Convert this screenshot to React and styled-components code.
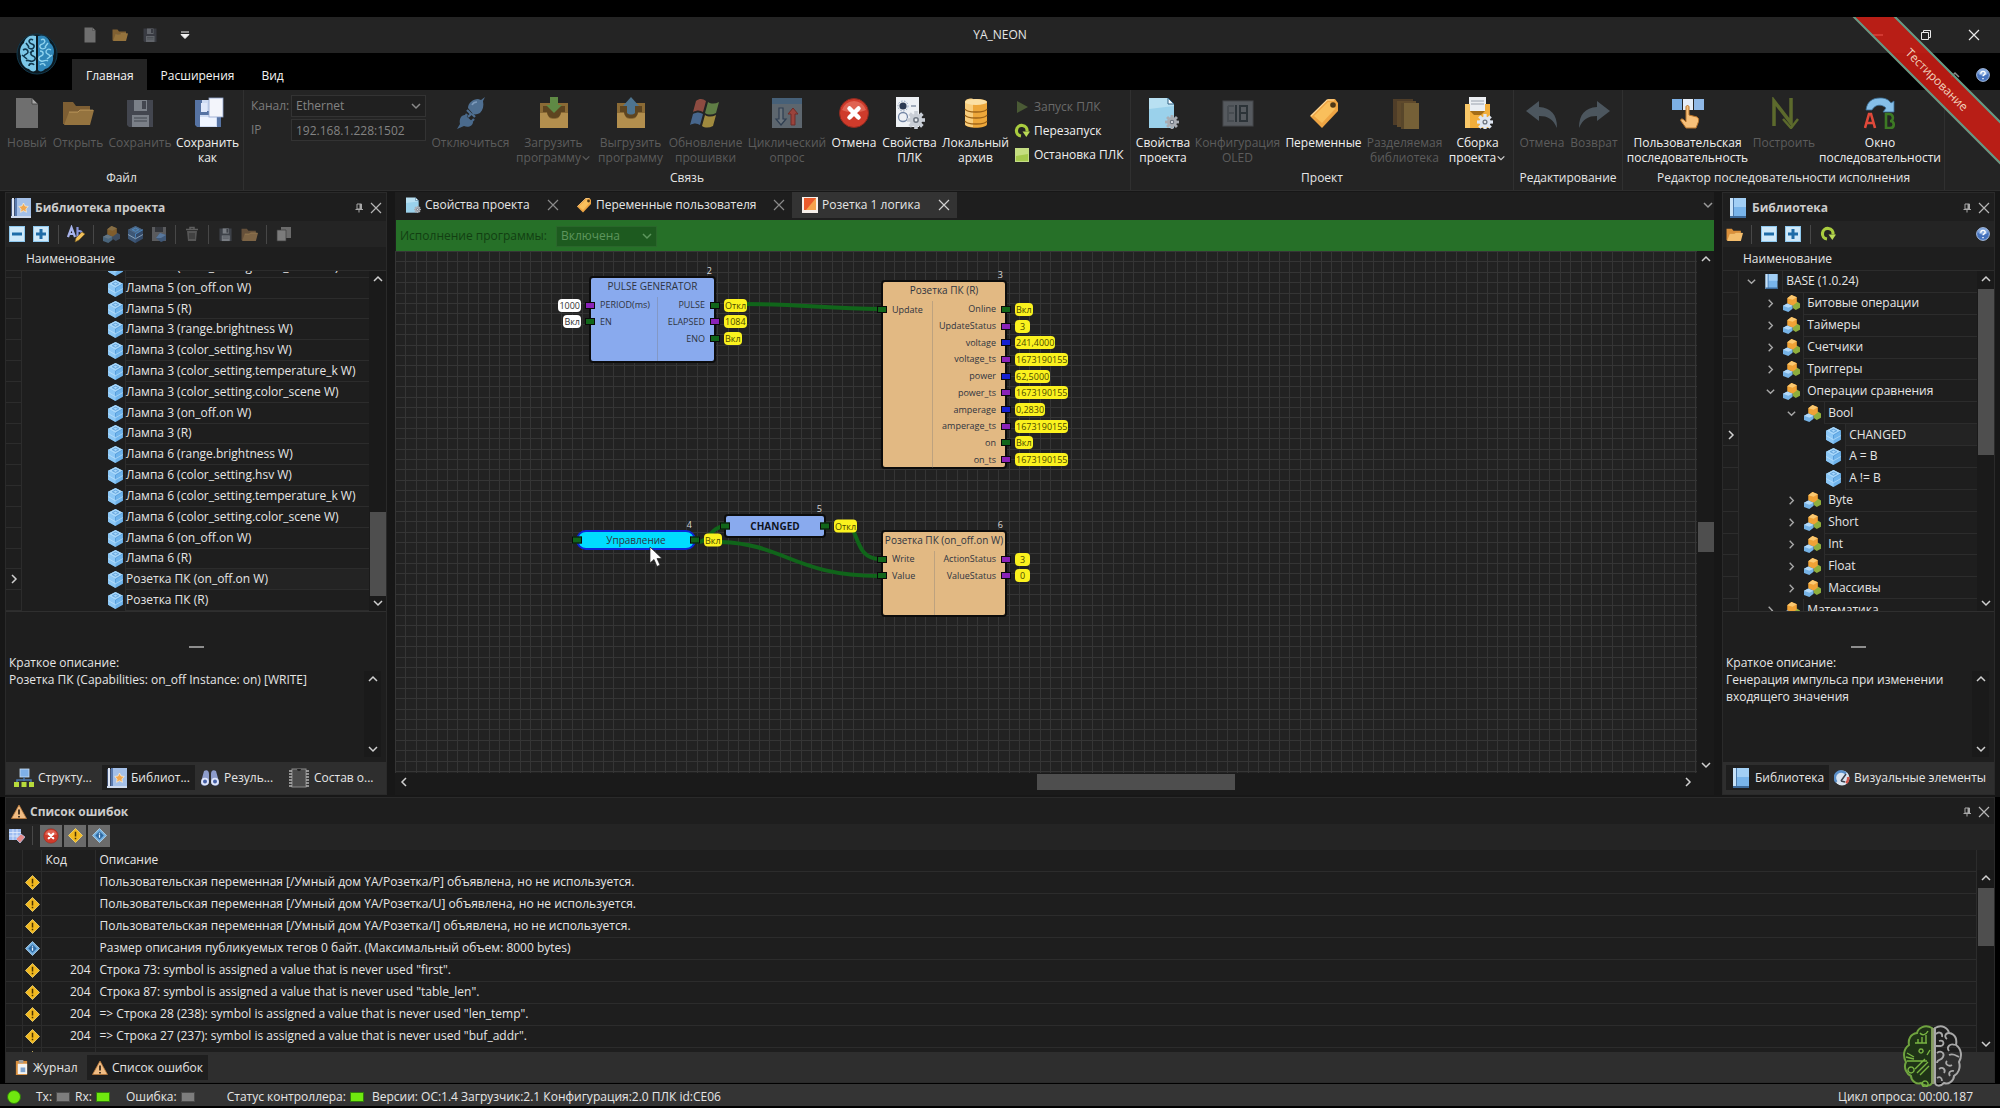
import React from 'react';
import styled, { createGlobalStyle, css } from 'styled-components';

const c = {
  black: '#000000',
  bar: '#242424',
  panel: '#1e1e1e',
  frame: '#2a2a2a',
  strip: '#2e2e2e',
  text: '#e6e6e6',
  dim: '#5c5c5c',
  line: '#2c2c2c',
  thumb: '#4e4e4e',
};

const Global = createGlobalStyle`
  * { box-sizing: border-box; }
  html, body { margin: 0; background: ${c.black}; }
  body, button, input, select, textarea, table {
    font-family: "Open Sans", "Noto Sans", sans-serif;
    font-size: 12px;
    line-height: 16px;
    color: ${c.text};
  }
  button { background: none; border: 0; padding: 0; cursor: default; }
  ul { list-style: none; margin: 0; padding: 0; }
  svg { display: block; flex: none; }
`;

/* ---------- icons ---------- */

const Svg = ({ size = 16, box = 16, children, ...rest }) => (
  <svg width={size} height={size} viewBox={`0 0 ${box} ${box}`} fill="none" aria-hidden="true" {...rest}>
    {children}
  </svg>
);

const Gear = ({ x, y, r, fill = '#c9ced6' }) => (
  <g transform={`translate(${x} ${y})`}>
    {[0, 45, 90, 135].map((a) => (
      <rect key={a} x={-r * 0.2} y={-r} width={r * 0.4} height={r * 2} fill={fill} transform={`rotate(${a})`} />
    ))}
    <circle r={r * 0.7} fill={fill} />
    <circle r={r * 0.32} fill="#6d7580" />
    <circle r={r * 0.16} fill="#e8ebef" />
  </g>
);

const PageIcon = ({ size, tint = '#8f8f8f' }) => (
  <Svg size={size} box={32}>
    <path d="M5 1h16l6 6v24H5z" fill={tint} />
    <path d="M21 1v6h6z" fill="#a5a5a5" stroke="#3c3c3c" strokeWidth=".8" />
  </Svg>
);
const FolderIcon = ({ size, a = '#a87a38', b = '#c69547' }) => (
  <Svg size={size} box={32}>
    <path d="M1 5h10l3 4h14v6H9L5 27H1z" fill={a} />
    <path d="M7 15h9l2-2h14l-4 15H2z" fill={b} />
    <path d="M7 15h9l2-2h13" stroke="#e8c07a" strokeWidth="1" opacity=".5" />
  </Svg>
);
const DiskIcon = ({ size, a = '#43464f', b = '#7b8088', page }) => (
  <Svg size={size} box={32}>
    <path d="M3 3h26v27H5l-2-2z" fill={a} />
    <rect x="10" y="3" width="13" height="11" fill={b} />
    <rect x="18" y="4" width="4" height="8" fill={a} />
    <rect x="8" y="18" width="17" height="12" fill={b} />
    <path d="M10 21h13M10 24h13" stroke={a} />
    {page && (
      <g>
        <rect x="8" y="20" width="16" height="9" fill="#eef4ff" />
        <rect x="9" y="6" width="6" height="9" fill="#dfe8fa" />
        <rect x="17" y="1" width="14" height="19" fill="#f3f5fb" stroke="#8fa3cc" strokeWidth=".8" />
      </g>
    )}
  </Svg>
);
const PlugIcon = () => (
  <Svg size={32} box={32}>
    <path d="M30 0l-2 4c1 5 0 9-3 12-2 1-5 2-7 1l-5-6c0-5 5-9 10-9l3 1z" fill="#4f6f91" />
    <path d="M12 13l4 4-3 3M17 17l3 3" stroke="#4f6f91" strokeWidth="2.200" />
    <path d="M2 32l3-5c-1-5 1-9 5-9l8 7c0 4-5 6-9 4z" fill="#4a6a8c" />
    <path d="M12 17l-2 3M19 22l-3 3" stroke="#4a6a8c" strokeWidth="2.400" />
    <path d="M17 8c1-2 3-3 5-3" stroke="#7d9abb" strokeWidth="1.500" />
  </Svg>
);
const BoxIcon = ({ up }) => (
  <Svg size={32} box={32}>
    <path d="M2 6h28v25H2z" fill="#8a6a35" />
    <path d="M2 16h7c1 5 4 6 7 6s6-1 7-6h7v15H2z" fill="#b38f4e" />
    <path d="M5 9h22v6h-4c-1 5-3 6-7 6s-6-1-7-6H5z" fill="#5e4520" />
    {up ? <path d="M16 0l8 9h-4v7c-2 2-6 2-8 0V9H8z" fill="#4e748f" /> : <path d="M16 16L8 8h4V0h8v8h4z" fill="#5f8a45" />}
  </Svg>
);
const FlagIcon = () => (
  <Svg size={32} box={32}>
    <path d="M6 4c4-3 7-2 10 0l-3 11c-3-2-6-2-10 0z" fill="#8d4b41" />
    <path d="M18 5c3 2 7 2 11 0l-3 11c-4 2-8 2-11 0z" fill="#5f7d45" />
    <path d="M3 17c4-2 7-2 10 0l-3 11c-3-2-6-2-10 0z" fill="#47668c" />
    <path d="M15 18c3 2 7 2 11 0l-3 11c-4 2-8 2-11 0z" fill="#a08a3e" />
  </Svg>
);
const CycleIcon = () => (
  <Svg size={32} box={32}>
    <rect x="1" y="1" width="30" height="30" fill="#5d666e" />
    <rect x="1" y="1" width="30" height="6" fill="#466078" />
    <path d="M8 11h4v11h3l-5 6-5-6h3z" fill="#6b747c" stroke="#2e3d50" strokeWidth="1.200" />
    <path d="M20 28V17h-3l5-6 5 6h-3v11z" fill="#9a433c" stroke="#6e2d28" />
  </Svg>
);
const CancelIcon = ({ size = 32 }) => (
  <Svg size={size} box={32}>
    <circle cx="16" cy="16" r="14.500" fill="#cf3b2b" stroke="#8e2a20" />
    <path d="M4 13a12.500 12.500 0 0 1 24 0c-6 3-18 3-24 0z" fill="#e77564" opacity=".7" />
    <path d="M11.500 11.500l9 9M20.500 11.500l-9 9" stroke="#fff" strokeWidth="4.500" strokeLinecap="round" />
  </Svg>
);
const PlcPropsIcon = () => (
  <Svg size={32} box={32}>
    <rect x="2" y="0" width="23" height="30" fill="#eef1f5" />
    <circle cx="9" cy="9" r="3.600" fill="#2d3a52" />
    <circle cx="9" cy="9" r="5" stroke="#8ca0bd" strokeDasharray="1.500 1.500" />
    <path d="M17 9h5M17 20h3" stroke="#8794a8" strokeWidth="1.500" />
    <circle cx="9" cy="20" r="4.500" stroke="#7486a5" strokeWidth="1.300" />
    <Gear x={22} y={23} r={9} />
  </Svg>
);
const DbIcon = () => (
  <Svg size={32} box={32}>
    <path d="M5 5c0-4 22-4 22 0v22c0 5-22 5-22 0z" fill="#eda73a" />
    <path d="M5 5c0-4 8-4 8-3v28c-4 0-8-1-8-3z" fill="#f8cd7c" />
    <ellipse cx="16" cy="5" rx="11" ry="3" fill="#fbe0a4" />
    <path d="M5 12c2 4 20 4 22 0M5 18c2 4 20 4 22 0M5 24c2 4 20 4 22 0" stroke="#9d6317" strokeWidth="1.300" />
  </Svg>
);
const PropsIcon = ({ size = 32 }) => (
  <Svg size={size} box={32}>
    <path d="M2 1h19l6 6v24H2z" fill="#b8e0f2" />
    <path d="M2 12l25-3v22H2z" fill="#8dcbe8" opacity=".7" />
    <path d="M21 1v6h6z" fill="#f5fbff" stroke="#2f5f80" />
    <Gear x={25} y={25} r={7} fill="#a9adb3" />
  </Svg>
);
const OledIcon = () => (
  <Svg size={32} box={32}>
    <rect x="1" y="4" width="30" height="25" fill="#565a5f" stroke="#44474b" />
    <path d="M6 9h6M6 9v7M6 16h6M6 16v8h6" stroke="#474c51" strokeWidth="2" />
    <path d="M14 8v17M18 9h7v7h-7zM18 16h7v8h-7z" stroke="#2c3338" strokeWidth="2" />
  </Svg>
);
const TagIcon = ({ size = 32 }) => (
  <Svg size={size} box={32}>
    <path d="M20 2h7l3 4v8L14 31 2 19z" fill="#eea544" />
    <path d="M6 19L20 5l5 1 2 6-13 14z" fill="#f9bf5c" />
    <circle cx="25" cy="8" r="2.800" fill="#4d3716" />
    <path d="M3 19L19 3h7" stroke="#fbd89a" strokeWidth="1.200" />
  </Svg>
);
const SharedLibIcon = () => (
  <Svg size={32} box={32}>
    <path d="M4 2h20v26H4z" fill="#4f3d28" />
    <path d="M8 4h19v26H8z" fill="#5f4a2c" />
    <path d="M12 6h18v26H12z" fill="#756037" />
    <path d="M12 6h3v26h-3z" fill="#58462a" />
  </Svg>
);
const BuildIcon = () => (
  <Svg size={32} box={32}>
    <rect x="7" y="0" width="17" height="14" fill="#eceff3" />
    <path d="M9 4h13M9 7h13" stroke="#9aa2ad" />
    <path d="M3 7h5v7h15V7h5v24H3z" fill="#f2ae3b" />
    <path d="M3 7h5v24H3z" fill="#f9c868" />
    <path d="M8 14h15l-4 4h-7z" fill="#a46d18" />
    <Gear x={23} y={25} r={8} fill="#dfe6f2" />
  </Svg>
);
const UndoIcon = ({ flip }) => (
  <Svg size={32} box={32} style={flip ? { transform: 'scaleX(-1)' } : undefined}>
    <path d="M0 14L13 4v6c12 1 18 7 18 21-4-9-9-12-18-12v5z" fill="#4c565e" />
  </Svg>
);
const HandSeqIcon = () => (
  <Svg size={32} box={32}>
    <rect x="0" y="2" width="10" height="11" fill="#7db0e4" />
    <rect x="11" y="2" width="10" height="11" fill="#e6eef8" />
    <rect x="22" y="2" width="10" height="11" fill="#8fb8e6" />
    <path d="M14 10c0-2 3-2 3 0v8l8 2c2 1 2 4 1 6l-2 5H14l-5-7c-1-2 1-3 3-1l2 2z" fill="#f6c07a" stroke="#b8742c" />
  </Svg>
);
const BuildSeqIcon = () => (
  <Svg size={32} box={32}>
    <path d="M6 29V4l17 22V1" stroke="#5c6a2c" strokeWidth="3.500" />
    <path d="M15 22l8 9 7-9" stroke="#5c6a2c" strokeWidth="2.500" />
  </Svg>
);
const SeqWindowIcon = () => (
  <Svg size={32} box={32}>
    <path d="M2 13C3 4 9 1 16 1c6 0 9 2 11 5l3-2v11H19l3-4c-4-4-11-4-14 2z" fill="#86bfe8" stroke="#3a6d94" strokeWidth=".8" />
    <path d="M1 31l4-14h2l4 14M3 26h6" stroke="#e0493a" strokeWidth="2.600" />
    <path d="M22 17v14h4c5 0 5-7 0-7 4 0 4-7-1-7z" stroke="#3d7a24" strokeWidth="2.600" />
  </Svg>
);
const PlayIcon = () => (
  <Svg>
    <path d="M3 2l11 6-11 6z" fill="#4a5a35" />
  </Svg>
);
const RestartIcon = ({ size = 16 }) => (
  <Svg size={size}>
    <path d="M13 8.500A5.300 5.300 0 1 0 7 13" stroke="#a9cc3f" strokeWidth="3.200" />
    <path d="M8.500 8.500H16L12.300 14z" fill="#b9da55" />
  </Svg>
);
const StopIcon = () => (
  <Svg>
    <rect x="1.500" y="1.500" width="13" height="13" fill="#a5c94c" stroke="#c4dd85" />
    <path d="M2 2h12v5L2 9z" fill="#c5de80" />
  </Svg>
);
const HelpIcon = ({ size = 16 }) => (
  <Svg size={size}>
    <circle cx="8" cy="8" r="7.300" fill="#4572bd" stroke="#b9cff0" />
    <ellipse cx="8" cy="5" rx="5.500" ry="3.500" fill="#a9c6ee" opacity=".7" />
    <path d="M5.500 6.500c0-3.500 5-3.500 5-.5 0 2-2.500 1.800-2.500 3.500M8 11.500v1.300" stroke="#fff" strokeWidth="1.600" />
  </Svg>
);
const Chevron = ({ dir = 'down', size = 12, color = '#d0d0d0' }) => {
  const d = { down: 'M2 4l4 4 4-4', up: 'M2 8l4-4 4 4', left: 'M8 2L4 6l4 4', right: 'M4 2l4 4-4 4' }[dir];
  return (
    <Svg size={size} box={12}>
      <path d={d} stroke={color} strokeWidth="1.500" />
    </Svg>
  );
};
const CrossIcon = ({ size = 12, color = '#b5b5b5' }) => (
  <Svg size={size} box={12}>
    <path d="M1 1l10 10M11 1L1 11" stroke={color} strokeWidth="1.200" />
  </Svg>
);
const PinIcon = () => (
  <Svg size={10} box={10}>
    <path d="M3 1h4.500v5H3zM1.500 6.500H9M5 6v3.500" stroke="#a8a8a8" />
    <path d="M5.500 1h2v5h-2z" fill="#a8a8a8" />
  </Svg>
);
const BookIcon = ({ size = 20, star }) => (
  <Svg size={size} box={20}>
    {star ? (
      <g>
        <path d="M0 1h20v19H0z" fill="#3f5072" />
        <path d="M4 0h16v18H4z" fill="#a4c0e8" />
        <path d="M1 0h2v18H1z" fill="#dfe7f5" />
        <path d="M4 0h2v18H4z" fill="#5a7bb0" />
        <path d="M0 18h20v2H0z" fill="#cdd9ec" />
        <path d="M12.500 5l1.500 3 3.300.5-2.400 2.400.6 3.400-3-1.600-3 1.600.6-3.400-2.400-2.400L11 8z" fill="#f0a850" stroke="#fff1d8" strokeWidth=".7" />
      </g>
    ) : (
      <g>
        <path d="M2 0h16v20H2z" fill="#78b4ea" />
        <path d="M6 0h12v9H6z" fill="#a2cff5" />
        <path d="M2 0h3v20H2z" fill="#c7e2f8" />
        <path d="M5 0h1v20H5z" fill="#4b79ab" />
        <path d="M2 18h16v2H2z" fill="#3b6898" />
      </g>
    )}
  </Svg>
);
const SquareIcon = ({ plus }) => (
  <Svg>
    <rect x=".5" y=".5" width="15" height="15" fill="#cfe9fa" stroke="#8ec8ee" />
    <path d={plus ? 'M3 8h10M8 3v10' : 'M3 8h10'} stroke="#1f6ca8" strokeWidth="3" />
  </Svg>
);
const AbIcon = () => (
  <Svg size={18} box={18}>
    <path d="M1 12L4.500 2.500 8 12M2.500 9h4" stroke="#a8b4ec" strokeWidth="2.200" />
    <path d="M10.500 2v9h2c3 0 3-5 0-5h-2" stroke="#8795dc" strokeWidth="2.200" />
    <path d="M8 17l1-4 6-6 3 2-6 6z" fill="#f0c05a" stroke="#7b5a1c" strokeWidth=".6" />
  </Svg>
);
const Cube = ({ size = 17, a = '#a9d8fb', b = '#6fb4ec', d = '#8dc8f6' }) => (
  <Svg size={size}>
    <path d="M8 0l7 3.500v8.500L8 16l-7-4V3.500z" fill={b} />
    <path d="M8 0l7 3.500L8 7.500 1 3.500z" fill={a} />
    <path d="M1 3.500l7 4V16l-7-4z" fill={d} />
    <path d="M5 3.500l3-1.500 3 1.500-3 1.500zM8 7.500l7-4M8 7.500V11" stroke="#4d93d3" strokeWidth=".7" />
    <path d="M1 8l7 4 7-4" stroke="#d4edff" strokeWidth=".6" opacity=".8" />
  </Svg>
);
const Blocks = ({ size = 17, dim }) => (
  <Svg size={size} opacity={dim ? 0.45 : 1}>
    <path d="M9 8l4-2 3 2v4l-4 2-3-2z" fill={dim ? '#5d7ea8' : '#8fae3c'} />
    <path d="M4 3l4-3 5 2v5L9 10 4 8z" fill="#f0a236" />
    <path d="M4 3l4-3 5 2-4 2.500z" fill="#fbc870" />
    <path d="M0 10l4-2 5 2v3l-4 3-5-2z" fill="#76b3e6" />
    <path d="M0 10l4-2 5 2-4 2z" fill="#b3dafa" />
  </Svg>
);
const SaveBlockIcon = () => (
  <Svg>
    <rect x="1" y="1" width="14" height="14" fill="#5a5b5e" />
    <rect x="4" y="1" width="8" height="5" fill="#33353a" />
    <path d="M5 12l4-5 6 2v5l-5 2z" fill="#3f5878" />
    <path d="M9 7l6 2-5 3-5 0z" fill="#58779c" />
  </Svg>
);
const TrashIcon = () => (
  <Svg>
    <path d="M2 3.500h12M6 3V1.500h4V3" stroke="#5e5e5e" strokeWidth="1.500" />
    <path d="M3 5h10l-1 10H4z" fill="#565656" />
    <path d="M6 7v6M8 7v6M10 7v6" stroke="#2c2c2c" />
  </Svg>
);
const CopyIcon = () => (
  <Svg>
    <path d="M5 1h10v11H5z" fill="#6a6a6a" />
    <path d="M1 4h9v11H1z" fill="#7b7b7b" stroke="#3a3a3a" strokeWidth=".7" />
  </Svg>
);
const StructIcon = () => (
  <Svg size={20} box={20}>
    <rect x="6" y="1" width="9" height="8" fill="#7fb0e8" stroke="#c7def6" strokeWidth=".8" />
    <path d="M10 9v4M3 14v-2h14v2" stroke="#4c78ad" strokeWidth="1.500" />
    <rect x="0" y="14" width="5" height="5" fill="#b7da3c" />
    <rect x="7.500" y="14" width="5" height="5" fill="#b7da3c" />
    <rect x="15" y="14" width="5" height="5" fill="#b7da3c" />
  </Svg>
);
const BinocularsIcon = () => (
  <Svg size={20} box={20}>
    <path d="M4 3c3-2 5 0 5 3v8c0 5-9 5-8 0zM16 3c-3-2-5 0-5 3v8c0 5 9 5 8 0z" fill="#8d9ccb" />
    <circle cx="5" cy="13.500" r="3.800" fill="#dfe6fb" />
    <circle cx="15" cy="13.500" r="3.800" fill="#dfe6fb" />
    <circle cx="5" cy="13.500" r="2" fill="#4660a6" />
    <circle cx="15" cy="13.500" r="2" fill="#4660a6" />
  </Svg>
);
const ChipIcon = () => (
  <Svg size={22} box={22}>
    <rect x="4" y="2" width="14" height="18" fill="#4b4b4b" stroke="#8a8a8a" />
    <path d="M1 4h3M1 7h3M1 10h3M1 13h3M1 16h3M1 19h3M18 4h3M18 7h3M18 10h3M18 13h3M18 16h3M18 19h3" stroke="#b5b5b5" strokeWidth="1.400" />
    <path d="M9 2a2 2 0 0 0 4 0" fill="#222" />
  </Svg>
);
const GaugeIcon = () => (
  <Svg>
    <circle cx="8" cy="8" r="7.500" fill="#d9e4f1" />
    <path d="M2.500 12A6 6 0 0 1 12 3.500" stroke="#5b8fc9" strokeWidth="2.500" />
    <path d="M14 7a6 6 0 0 1-2 6" stroke="#d0554b" strokeWidth="2.500" />
    <path d="M7 11l5-7M7 11l4 1" stroke="#3a3f4a" strokeWidth="1.500" />
  </Svg>
);
const LogicIcon = () => (
  <Svg size={16}>
    <rect x="0" y="0" width="16" height="16" fill="#f7f0ea" />
    <rect x="2" y="1" width="12" height="12" fill="#ea5b2c" />
    <path d="M14 1v12H4z" fill="#f6a34c" />
  </Svg>
);
const WarnTriangle = ({ size = 16 }) => (
  <Svg size={size}>
    <path d="M8 1l7.500 13.500H.5z" fill="#f1bd84" stroke="#b9783a" strokeWidth=".8" />
    <path d="M8 5.500v5M8 12v1.500" stroke="#2e2013" strokeWidth="1.700" />
  </Svg>
);
const Diamond = ({ info, size = 15 }) => (
  <Svg size={size}>
    <path d="M8 .5L15.500 8 8 15.500.5 8z" fill={info ? '#74b0e0' : '#f2b91f'} stroke={info ? '#b9dcf5' : '#fadf7a'} strokeWidth=".8" />
    {info ? (
      <g>
        <path d="M8 3.500L12.500 8 8 12.500 3.500 8z" fill="#2f6aa3" />
        <path d="M8 7v3.500M8 5v1" stroke="#e8f4ff" strokeWidth="1.300" />
      </g>
    ) : (
      <path d="M8 4v5M8 10.500v1.500" stroke="#4a3303" strokeWidth="1.600" />
    )}
  </Svg>
);
const ClearIcon = () => (
  <Svg>
    <rect x="0" y="1" width="12" height="11" fill="#9dbcf0" />
    <path d="M0 4.500h12M0 8h12M4 1v11M8 1v11" stroke="#e5edfb" strokeWidth=".8" />
    <path d="M7 11l5-5 4 3-5 6z" fill="#e88a8a" stroke="#b9c9ee" strokeWidth=".8" />
  </Svg>
);
const ClipboardIcon = () => (
  <Svg size={15}>
    <rect x="2" y="1" width="12" height="15" fill="#d98f3e" />
    <rect x="4" y="4" width="10" height="11" fill="#f4f4f2" />
    <rect x="5" y="0" width="5" height="3" fill="#9d9d9d" />
    <path d="M7 8h5v5H7z" fill="#7ea3cf" />
  </Svg>
);
const AppBrain = () => (
  <svg width="42" height="46" viewBox="0 0 42 46" fill="none" aria-hidden="true">
    <circle cx="21" cy="23" r="20" fill="#0b1a22" stroke="#12384c" />
    <path d="M20 5C14 3 9 7 8 12c-4 3-5 9-3 13-1 6 3 12 8 13 2 3 6 3 7 1z" fill="#7cc8e8" />
    <path d="M22 5c6-2 11 2 12 7 4 3 5 9 3 13 1 6-3 12-8 13-2 3-6 3-7 1z" fill="#2f86b8" />
    <path d="M17 9c-3-2-5 1-3 3s5 1 4 4-5 2-6 0M7 19c3-2 5 0 5 2s-3 2-4 4M18 20c-4 0-4 4-1 5s3 4 0 5-5-2-7 0M13 35c0-3 4-3 5-1M10 12l3 4M6 24l5 4M14 22l3-3" stroke="#10394f" strokeWidth="1.600" />
    <path d="M25 9c3-2 5 1 3 3s-5 1-4 4 5 2 6 0M35 19c-3-2-5 0-5 2s3 2 4 4M24 20c4 0 4 4 1 5s-3 4 0 5 5-2 7 0M29 35c0-3-4-3-5-1M32 12l-3 4M36 24l-5 4" stroke="#8fd3ee" strokeWidth="1.400" />
  </svg>
);
const WatermarkBrain = () => (
  <svg width="60" height="62" viewBox="0 0 60 62" fill="none" aria-hidden="true">
    <path d="M29 3C22-1 15 3 14 8 7 9 5 15 6 20c-6 4-6 12-3 17-3 6 1 12 5 14 0 5 6 9 10 7 4 4 10 3 11 0z" fill="#1f3317" stroke="#6fa33f" strokeWidth="2" />
    <path d="M30 3v56" stroke="#8a9a6a" strokeWidth="3" />
    <path d="M17 8c2 3 6 2 8-2M12 18h12M15 14v4M19 12v6M23 10v8M4 28l7 4M3 32l8 2M4 36h20M18 24a2 2 0 1 0 .1 0M24 30l3-5M12 44l10-10M14 48l11-11M17 50l9-9M8 42a3 3 0 1 0 .1 0M22 56a3 3 0 1 0 .1 0" stroke="#79b543" strokeWidth="1.400" />
    <path d="M32 3c7-4 13 0 14 5 7 1 8 7 7 12 6 4 6 12 3 17 2 6-1 12-5 14 0 5-6 9-10 7-4 4-8 3-9 0z" stroke="#a8a8a8" strokeWidth="2" />
    <path d="M33 9c3-3 7-1 6 3M46 8c-4 0-5 4-2 6M36 16c5-2 6 4 2 5h-5M52 20c-5-2-9 2-6 6M34 28c4-3 8 0 6 4s-6 2-6 6M46 30c4-2 6 0 10 2M44 36c-3 3 2 6 5 4M36 44c4-3 7 1 5 4M51 46c-4-1-6 2-4 5M34 53c3-2 5 0 5 3" stroke="#a8a8a8" strokeWidth="1.800" />
  </svg>
);
const CursorIcon = () => (
  <svg width="14" height="20" viewBox="0 0 14 20" aria-hidden="true">
    <path d="M1 0v16l4-3.500 3 7 3-1.500-3-6.500h5z" fill="#fff" stroke="#222" strokeWidth=".7" />
  </svg>
);

/* ---------- window frame ---------- */

const Shell = styled.div`
  position: relative;
  display: flex;
  flex-direction: column;
  height: 100vh;
  padding: 17px 0 2px;
  overflow: hidden;
  background: ${c.black};
`;
const TitleBar = styled.header`
  display: grid;
  grid-template-columns: 1fr auto 1fr;
  align-items: center;
  height: 36px;
  flex: none;
  background: ${c.bar};
`;
const QuickBar = styled.div`
  display: flex;
  align-items: center;
  gap: 14px;
  padding-left: 82px;
`;
const QuickButton = styled.button`
  width: 16px;
  height: 16px;
  margin-right: ${(p) => p.$after || 0}px;
  opacity: ${(p) => (p.$dim ? 0.7 : 1)};
`;
const AppTitle = styled.h1`
  margin: 0;
  font-size: 12px;
  font-weight: 400;
`;
const WindowButtons = styled.div`
  display: flex;
  justify-content: flex-end;
  gap: 32px;
  padding-right: 18px;
`;
const WindowButton = styled.button`
  width: 16px;
  height: 16px;
  display: grid;
  place-items: center;
`;
const TabRow = styled.nav`
  display: flex;
  align-items: flex-end;
  height: 37px;
  flex: none;
  padding: 0 8px 0 72px;
`;
const RibbonTab = styled.button`
  height: 31px;
  padding: 2px 13px 0 14px;
  color: #f4f4f4;
  background: ${(p) => (p.$active ? c.bar : 'transparent')};
`;
const TabTools = styled.div`
  display: flex;
  gap: 10px;
  align-items: center;
  margin-left: auto;
  height: 31px;
`;
const Logo = styled.div`
  position: absolute;
  left: 16px;
  top: 31px;
  z-index: 2;
`;
const Corner = styled.div`
  position: absolute;
  top: 17px;
  right: 0;
  width: 148px;
  height: 148px;
  overflow: hidden;
  pointer-events: none;
  z-index: 3;
`;
const CornerBand = styled.div`
  position: absolute;
  left: -20px;
  top: 47px;
  width: 210px;
  height: 31px;
  border: 2px solid #5f9c88;
  background: rgba(205, 30, 20, 0.88);
  color: #f0d2bd;
  font-size: 12px;
  line-height: 27px;
  text-align: center;
  transform: rotate(45deg);
`;

/* ---------- ribbon ---------- */

const Ribbon = styled.div`
  display: flex;
  height: 101px;
  flex: none;
  background: ${c.bar};
  border-bottom: 1px solid #2d2d2d;
`;
const Group = styled.section`
  display: flex;
  flex-direction: column;
  padding: 5px 2px 0;
  border-right: 1px solid #303030;
`;
const GroupBody = styled.div`
  display: flex;
  height: 75px;
  padding-left: ${(p) => p.$lead || 0}px;
`;
const GroupTitle = styled.h2`
  margin: 0;
  font-size: 12px;
  font-weight: 400;
  text-align: center;
`;
const BigButton = styled.button`
  display: flex;
  flex-direction: column;
  align-items: center;
  width: ${(p) => p.$w}px;
  padding-top: 2px;
  gap: 6px;
  line-height: 15px;
  white-space: nowrap;
  color: ${(p) => (p.disabled ? c.dim : '#f0f0f0')};
`;
const Caption = styled.span`
  display: flex;
  flex-direction: column;
  align-items: center;
`;
const CaptionLine = styled.span`
  display: flex;
  align-items: center;
`;
const LinkForm = styled.div`
  display: grid;
  grid-template-columns: 40px 135px;
  grid-auto-rows: 22px;
  row-gap: 2px;
  align-items: center;
  color: #7c7c7c;
  padding-right: 3px;
`;
const Field = css`
  width: 100%;
  height: 22px;
  padding: 0 4px;
  color: #838383;
  background: #202020;
  border: 1px solid #333333;
  border-radius: 0;
  opacity: 1;
  appearance: none;
`;
const TextField = styled.input`${Field}`;
const SelectWrap = styled.div`
  position: relative;
  svg { position: absolute; right: 4px; top: 50%; transform: translateY(-50%); }
`;
const SelectField = styled.select`${Field}`;
const StackList = styled.div`
  display: flex;
  flex-direction: column;
  width: 117px;
  padding-left: 3px;
`;
const SmallButton = styled.button`
  display: flex;
  align-items: center;
  gap: 4px;
  height: 24px;
  white-space: nowrap;
  color: ${(p) => (p.disabled ? '#6a6a6a' : '#f0f0f0')};
`;

const Big = ({ icon, lines, w, disabled, arrow }) => (
  <BigButton $w={w} disabled={disabled}>
    {icon}
    <Caption>
      {lines.map((l, i) => (
        <CaptionLine key={l}>
          {l}
          {arrow && i === lines.length - 1 && <Chevron size={10} color={disabled ? c.dim : '#d0d0d0'} />}
        </CaptionLine>
      ))}
    </Caption>
  </BigButton>
);

/* ---------- docking ---------- */

const Workspace = styled.main`
  display: grid;
  grid-template-columns: 382px minmax(0, 1fr) 273px;
  gap: 8px;
  flex: 1;
  min-height: 0;
  padding: 1px 5px 2px;
  background: #171717;
`;
const Panel = styled.section`
  display: flex;
  flex-direction: column;
  min-width: 0;
  min-height: 0;
  background: ${c.panel};
  border: 1px solid ${c.frame};
`;
const PanelHead = styled.header`
  display: flex;
  align-items: center;
  height: ${(p) => p.$h || 28}px;
  flex: none;
  gap: ${(p) => p.$gap || 4}px;
  padding: 2px 2px 0 5px;
`;
const HeadTools = styled.span`
  display: flex;
  gap: 2px;
`;
const PanelTitle = styled.h3`
  margin: 0 auto 0 0;
  font-size: 12px;
  font-weight: 700;
  color: #cccccc;
`;
const IconButton = styled.button`
  display: grid;
  place-items: center;
  width: ${(p) => p.$w || 18}px;
  height: 22px;
  background: ${(p) => (p.$on ? '#6b6b6b' : 'transparent')};
`;
const Toolbar = styled.div`
  display: flex;
  align-items: center;
  height: 26px;
  flex: none;
  gap: ${(p) => p.$gap || 6}px;
  padding: 0 2px ${(p) => p.$foot || 0}px;
  background: ${c.bar};
`;
const Divider = styled.i`
  width: 1px;
  height: 19px;
  margin: 0 ${(p) => p.$m || 1}px;
  background: #474747;
`;
const Spring = styled.span`flex: 1;`;
const ColumnHead = styled.div`
  display: flex;
  align-items: center;
  height: 24px;
  flex: none;
  padding-left: 20px;
  border-bottom: 1px solid ${c.line};
`;
const TreeArea = styled.div`
  display: flex;
  height: 341px;
  flex: none;
  border-bottom: 1px solid #2f2f2f;
`;
const TreeView = styled.div`
  display: flex;
  flex-direction: column;
  justify-content: ${(p) => (p.$end ? 'flex-end' : 'flex-start')};
  flex: 1;
  min-width: 0;
  overflow: hidden;
`;
const TreeList = styled.ul`
  display: grid;
  grid-auto-rows: 1fr;
  flex: none;
  height: ${(p) => p.$h}px;
`;
const TreeRow = styled.li`
  display: flex;
  align-items: stretch;
  min-height: 0;
`;
const RowMark = styled.span`
  display: grid;
  place-items: center;
  width: 16px;
  border: solid ${c.line};
  border-width: 0 1px 1px 0;
`;
const RowLead = styled.span`
  display: flex;
  align-items: center;
  justify-content: flex-end;
  gap: ${(p) => p.$gap}px;
  width: ${(p) => p.$w}px;
  padding-right: ${(p) => p.$pad}px;
`;
const RowText = styled.span`
  display: flex;
  align-items: center;
  flex: 1;
  white-space: nowrap;
  border: solid ${c.line};
  border-width: 0 0 1px 1px;
  background: ${(p) => (p.$selected ? '#232323' : 'transparent')};
`;
const VBar = styled.div`
  display: flex;
  flex-direction: column;
  align-items: center;
  justify-content: space-between;
  width: 17px;
  flex: none;
  padding: 2px 0;
  background: #1a1a1a;
`;
const VTrack = styled.div`
  display: flex;
  flex-direction: column;
  flex: 1;
  width: 16px;
  padding-top: 3px;
`;
const VSpace = styled.div`flex: ${(p) => p.$grow};`;
const VThumb = styled.div`
  flex: ${(p) => p.$grow};
  background: ${c.thumb};
`;
const Scroll = ({ before, thumb, after }) => (
  <VBar>
    <Chevron dir="up" />
    <VTrack>
      <VSpace $grow={before} />
      {thumb > 0 && <VThumb $grow={thumb} />}
      <VSpace $grow={after} />
    </VTrack>
    <Chevron />
  </VBar>
);
const Splitter = styled.div`
  display: flex;
  align-items: flex-end;
  justify-content: center;
  height: 36px;
  flex: none;
  &::after {
    content: "";
    width: 15px;
    height: 2px;
    background: #8e8e8e;
  }
`;
const Description = styled.div`
  display: grid;
  grid-template-columns: 1fr 20px;
  grid-template-rows: 17px 1fr;
  flex: 1;
  min-height: 0;
  padding: 6px 2px 5px 3px;
  line-height: 17px;
`;
const DescTitle = styled.span`grid-column: 1 / -1;`;
const DescText = styled.p`margin: 0;`;
const BottomTabs = styled.nav`
  display: flex;
  height: ${(p) => p.$h || 32}px;
  flex: none;
  align-items: flex-start;
  padding: 3px 3px 0;
  background: ${c.strip};
`;
const BottomTab = styled.button`
  display: flex;
  align-items: center;
  height: 25px;
  width: ${(p) => (p.$w ? `${p.$w}px` : 'auto')};
  padding: 0 5px;
  gap: 4px;
  white-space: nowrap;
  background: ${(p) => (p.$active ? c.panel : 'transparent')};
`;

/* ---------- editor ---------- */

const Editor = styled.section`
  display: flex;
  flex-direction: column;
  min-width: 0;
  background: ${c.panel};
`;
const DocTabs = styled.nav`
  display: flex;
  align-items: center;
  height: 26px;
  flex: none;
`;
const DocTab = styled.div`
  display: flex;
  align-items: center;
  width: ${(p) => p.$w}px;
  height: 26px;
  padding: 0 4px 0 10px;
  background: ${(p) => (p.$active ? '#333333' : 'transparent')};
`;
const DocButton = styled.button`
  display: flex;
  align-items: center;
  flex: 1;
  gap: 4px;
  white-space: nowrap;
`;
const RunBar = styled.div`
  display: flex;
  align-items: center;
  height: 31px;
  flex: none;
  gap: 9px;
  margin: 2px 0 0 1px;
  padding: 1px 0 0 4px;
  background: #267028;
  color: #123f12;
`;
const RunSelect = styled.select`
  width: 101px;
  height: 21px;
  padding: 0 4px;
  color: #5d965d;
  opacity: 1;
  background: #1d5a1f;
  border: 1px solid #2a662b;
  border-radius: 0;
  appearance: none;
`;
const CanvasRow = styled.div`
  display: flex;
  flex: 1;
  min-height: 0;
`;
const gridStops = (dir) =>
  `repeating-linear-gradient(${dir}, #353535 0 1px, transparent 1px 10px, #353535 10px 11px, transparent 11px 21px, #353535 21px 22px, transparent 22px 31px, #353535 31px 32px, transparent 32px 42px, #353535 42px 43px, transparent 43px 52px)`;
const Canvas = styled.div`
  position: relative;
  flex: 1;
  overflow: hidden;
  background: ${gridStops('to right')}, ${gridStops('to bottom')}, #222222;
`;
const HBar = styled.div`
  display: flex;
  align-items: center;
  height: 22px;
  flex: none;
  padding: 0 20px 4px 3px;
  background: #1a1a1a;
`;
const HSpace = styled.div`flex: ${(p) => p.$grow};`;
const HThumb = styled.div`
  flex: ${(p) => p.$grow};
  height: 16px;
  background: ${c.thumb};
`;
const Wires = styled.svg`
  position: absolute;
  inset: 0;
`;
const Node = styled.article`
  position: absolute;
  left: ${(p) => p.$x}px;
  top: ${(p) => p.$y}px;
  width: ${(p) => p.$w}px;
  height: ${(p) => p.$h}px;
  border: 2px solid ${(p) => p.$edge || '#0c0c0c'};
  border-radius: ${(p) => p.$round || 4}px;
  background: ${(p) => p.$fill};
  color: #2f3440;
  font-size: 9px;
  line-height: 14px;
`;
const NodeNumber = styled.span`
  position: absolute;
  right: 2px;
  top: -13px;
  font-size: 9px;
  line-height: 12px;
  color: #d8d8d8;
`;
const NodeTitle = styled.div`
  display: grid;
  place-items: center;
  height: ${(p) => p.$h || 16}px;
  font-size: 10px;
  font-weight: ${(p) => (p.$strong ? 700 : 400)};
  white-space: nowrap;
  color: ${(p) => (p.$strong ? '#10141c' : 'inherit')};
`;
const NodeBody = styled.div`
  display: grid;
  grid-template-columns: ${(p) => p.$split}fr ${(p) => 100 - p.$split}fr;
  height: calc(100% - 16px);
  padding-top: 3px;
`;
const PortColumn = styled.ul`
  display: grid;
  grid-auto-rows: 1fr;
  height: ${(p) => p.$h}px;
`;
const Half = styled.div`
  border-left: ${(p) => (p.$line ? '1px solid rgba(120,120,120,.35)' : '0')};
`;
const PortRow = styled.li`
  position: relative;
  display: flex;
  align-items: center;
  flex-direction: ${(p) => (p.$out ? 'row-reverse' : 'row')};
  gap: 5px;
  margin: ${(p) => (p.$out ? '0 -6px 0 0' : '0 0 0 -6px')};
  white-space: nowrap;
`;
const portColors = { bool: '#11661a', int: '#8a22b8', real: '#1620d0' };
const Port = styled.i`
  width: 10px;
  height: 7px;
  flex: none;
  border: 1px solid #0a0a0a;
  background: ${(p) => portColors[p.$kind]};
`;
const Badge = styled.span`
  position: absolute;
  ${(p) => (p.$left ? 'right: calc(100% + 4px);' : 'left: calc(100% + 4px);')}
  min-width: 15px;
  padding: 0 1px;
  border-radius: 4px;
  font-size: 9px;
  line-height: 13px;
  text-align: center;
  color: ${(p) => (p.$plain ? '#333' : '#4c4a00')};
  background: ${(p) => (p.$plain ? '#ffffff' : '#fbf21e')};
`;
const SidePort = styled.span`
  position: absolute;
  top: 50%;
  display: flex;
  align-items: center;
  ${(p) => (p.$out ? 'right: -6px;' : 'left: -6px;')}
  transform: translateY(-50%);
`;
const Pointer = styled.span`
  position: absolute;
  left: 254px;
  top: 296px;
`;

const BLUE = '#89aaee';
const SAND = '#e2b983';

const Ports = ({ list, out, h }) => (
  <PortColumn $h={h}>
    {list.map((p) => (
      <PortRow key={p.name} $out={out}>
        <Port $kind={p.kind} />
        {p.name}
        {p.value && (
          <Badge $left={!out} $plain={!out}>
            {p.value}
          </Badge>
        )}
      </PortRow>
    ))}
  </PortColumn>
);

const Block = ({ n, title, x, y, w, h, fill, split, ins, outs, insH, outsH }) => (
  <Node $x={x} $y={y} $w={w} $h={h} $fill={fill}>
    <NodeNumber>{n}</NodeNumber>
    <NodeTitle>{title}</NodeTitle>
    <NodeBody $split={split}>
      <Half>
        <Ports list={ins} h={insH} />
      </Half>
      <Half $line>
        <Ports list={outs} out h={outsH} />
      </Half>
    </NodeBody>
  </Node>
);

/* ---------- errors & status ---------- */

const ErrorDock = styled.section`
  display: flex;
  flex-direction: column;
  height: 286px;
  flex: none;
  margin: 0 5px 1px;
  background: ${c.panel};
  border: 1px solid ${c.frame};
`;
const ErrorArea = styled.div`
  display: flex;
  flex: 1;
  min-height: 0;
  overflow: hidden;
`;
const TableView = styled.div`
  flex: 1;
  overflow: hidden;
`;
const ErrorTable = styled.table`
  width: 100%;
  border-collapse: collapse;
  table-layout: fixed;
`;
const Th = styled.th`
  height: 21px;
  padding: 0 4px;
  font-weight: 400;
  text-align: left;
  border-bottom: 1px solid ${c.line};
  border-right: 1px solid ${c.line};
`;
const Td = styled.td`
  height: 22px;
  padding: 0 4px;
  white-space: nowrap;
  text-align: ${(p) => p.$align || 'left'};
  border-bottom: 1px solid ${c.line};
  border-right: 1px solid ${c.line};
`;
const IconTd = styled(Td)`padding: 0 0 0 2px;`;
const ScrollColumn = styled.div`
  display: flex;
  padding-top: 20px;
`;
const StatusBar = styled.footer`
  display: flex;
  align-items: center;
  height: 22px;
  flex: none;
  padding: 4px 27px 0 7px;
  background: #343434;
`;
const StatusItem = styled.span`
  display: flex;
  align-items: center;
  gap: 4px;
  margin-left: ${(p) => p.$m}px;
  white-space: nowrap;
`;
const Lamp = styled.i`
  width: 14px;
  height: ${(p) => (p.$dot ? 14 : 10)}px;
  border-radius: ${(p) => (p.$dot ? '50%' : '0')};
  border: 1px solid ${(p) => (p.$on ? '#2f7a0c' : '#4a4a4a')};
  background: ${(p) => (p.$on ? '#6fe80f' : '#7d7d7d')};
`;
const Watermark = styled.div`
  position: absolute;
  right: 37px;
  bottom: 21px;
`;

/* ---------- data ---------- */

const lampRows = (n) => [
  `Лампа ${n} (range.brightness W)`,
  `Лампа ${n} (color_setting.hsv W)`,
  `Лампа ${n} (color_setting.temperature_k W)`,
  `Лампа ${n} (color_setting.color_scene W)`,
  `Лампа ${n} (on_off.on W)`,
  `Лампа ${n} (R)`,
];
const projectRows = [
  ...lampRows(5).slice(3),
  ...lampRows(3),
  ...lampRows(6),
  'Розетка ПК (on_off.on W)',
  'Розетка ПК (R)',
];
const libraryRows = [
  [0, 'book', 'BASE (1.0.24)', 'down'],
  [1, 'group', 'Битовые операции', 'right'],
  [1, 'group', 'Таймеры', 'right'],
  [1, 'group', 'Счетчики', 'right'],
  [1, 'group', 'Триггеры', 'right'],
  [1, 'group', 'Операции сравнения', 'down'],
  [2, 'group', 'Bool', 'down'],
  [3, 'cube', 'CHANGED'],
  [3, 'cube', 'A = B'],
  [3, 'cube', 'A != B'],
  [2, 'group', 'Byte', 'right'],
  [2, 'group', 'Short', 'right'],
  [2, 'group', 'Int', 'right'],
  [2, 'group', 'Float', 'right'],
  [2, 'group', 'Массивы', 'right'],
  [1, 'group', 'Математика', 'right'],
];
const errors = [
  ['', 'Пользовательская переменная [/Умный дом YA/Розетка/P] объявлена, но не используется.'],
  ['', 'Пользовательская переменная [/Умный дом YA/Розетка/U] объявлена, но не используется.'],
  ['', 'Пользовательская переменная [/Умный дом YA/Розетка/I] объявлена, но не используется.'],
  ['', 'Размер описания публикуемых тегов 0 байт. (Максимальный объем: 8000 bytes)', true],
  ['204', 'Строка 73: symbol is assigned a value that is never used "first".'],
  ['204', 'Строка 87: symbol is assigned a value that is never used "table_len".'],
  ['204', '=> Строка 28 (238): symbol is assigned a value that is never used "len_temp".'],
  ['204', '=> Строка 27 (237): symbol is assigned a value that is never used "buf_addr".'],
  ['', ''],
];
const pulseOuts = [
  { name: 'PULSE', kind: 'bool', value: 'Откл' },
  { name: 'ELAPSED', kind: 'int', value: '1084' },
  { name: 'ENO', kind: 'bool', value: 'Вкл' },
];
const pulseIns = [
  { name: 'PERIOD(ms)', kind: 'int', value: '1000' },
  { name: 'EN', kind: 'bool', value: 'Вкл' },
];
const socketOuts = [
  { name: 'Online', kind: 'bool', value: 'Вкл' },
  { name: 'UpdateStatus', kind: 'int', value: '3' },
  { name: 'voltage', kind: 'real', value: '241,4000' },
  { name: 'voltage_ts', kind: 'int', value: '1673190155' },
  { name: 'power', kind: 'real', value: '62,5000' },
  { name: 'power_ts', kind: 'int', value: '1673190155' },
  { name: 'amperage', kind: 'real', value: '0,2830' },
  { name: 'amperage_ts', kind: 'int', value: '1673190155' },
  { name: 'on', kind: 'bool', value: 'Вкл' },
  { name: 'on_ts', kind: 'int', value: '1673190155' },
];
const writeOuts = [
  { name: 'ActionStatus', kind: 'int', value: '3' },
  { name: 'ValueStatus', kind: 'int', value: '0' },
];

const treeIcons = { book: <BookIcon size={15} />, group: <Blocks />, cube: <Cube /> };

const HeadButtons = () => (
  <HeadTools>
    <IconButton $w={14} aria-label="Закрепить"><PinIcon /></IconButton>
    <IconButton $w={16} aria-label="Закрыть"><CrossIcon /></IconButton>
  </HeadTools>
);

/* ---------- sections ---------- */

const RibbonBar = () => (
  <Ribbon>
    <Group>
      <GroupBody $lead={2}>
        <Big w={46} disabled icon={<PageIcon size={32} tint="#6f6f6f" />} lines={['Новый']} />
        <Big w={56} disabled icon={<FolderIcon size={32} a="#7d5e33" b="#94733f" />} lines={['Открыть']} />
        <Big w={68} disabled icon={<DiskIcon size={32} />} lines={['Сохранить']} />
        <Big w={67} icon={<DiskIcon size={32} a="#5673a3" b="#cfdcf3" page />} lines={['Сохранить', 'как']} />
      </GroupBody>
      <GroupTitle>Файл</GroupTitle>
    </Group>
    <Group>
      <GroupBody $lead={5}>
        <LinkForm>
          <label htmlFor="channel">Канал:</label>
          <SelectWrap>
            <SelectField id="channel" disabled defaultValue="Ethernet">
              <option>Ethernet</option>
            </SelectField>
            <Chevron color="#8a8a8a" />
          </SelectWrap>
          <label htmlFor="ip">IP</label>
          <TextField id="ip" disabled defaultValue="192.168.1.228:1502" />
        </LinkForm>
        <Big w={83} disabled icon={<PlugIcon />} lines={['Отключиться']} />
        <Big w={83} disabled arrow icon={<BoxIcon />} lines={['Загрузить', 'программу']} />
        <Big w={71} disabled icon={<BoxIcon up />} lines={['Выгрузить', 'программу']} />
        <Big w={79} disabled icon={<FlagIcon />} lines={['Обновление', 'прошивки']} />
        <Big w={84} disabled icon={<CycleIcon />} lines={['Циклический', 'опрос']} />
        <Big w={50} icon={<CancelIcon />} lines={['Отмена']} />
        <Big w={61} icon={<PlcPropsIcon />} lines={['Свойства', 'ПЛК']} />
        <Big w={71} icon={<DbIcon />} lines={['Локальный', 'архив']} />
        <StackList>
          <SmallButton disabled><PlayIcon />Запуск ПЛК</SmallButton>
          <SmallButton><RestartIcon />Перезапуск</SmallButton>
          <SmallButton><StopIcon />Остановка ПЛК</SmallButton>
        </StackList>
      </GroupBody>
      <GroupTitle>Связь</GroupTitle>
    </Group>
    <Group>
      <GroupBody>
        <Big w={60} icon={<PropsIcon />} lines={['Свойства', 'проекта']} />
        <Big w={89} disabled icon={<OledIcon />} lines={['Конфигурация', 'OLED']} />
        <Big w={83} icon={<TagIcon />} lines={['Переменные']} />
        <Big w={79} disabled icon={<SharedLibIcon />} lines={['Разделяемая', 'библиотека']} />
        <Big w={67} arrow icon={<BuildIcon />} lines={['Сборка', 'проекта']} />
      </GroupBody>
      <GroupTitle>Проект</GroupTitle>
    </Group>
    <Group>
      <GroupBody>
        <Big w={52} disabled icon={<UndoIcon />} lines={['Отмена']} />
        <Big w={52} disabled icon={<UndoIcon flip />} lines={['Возврат']} />
      </GroupBody>
      <GroupTitle>Редактирование</GroupTitle>
    </Group>
    <Group>
      <GroupBody>
        <Big w={125} icon={<HandSeqIcon />} lines={['Пользовательская', 'последовательность']} />
        <Big w={68} disabled icon={<BuildSeqIcon />} lines={['Построить']} />
        <Big w={124} icon={<SeqWindowIcon />} lines={['Окно', 'последовательности']} />
      </GroupBody>
      <GroupTitle>Редактор последовательности исполнения</GroupTitle>
    </Group>
  </Ribbon>
);

const ProjectPanel = () => (
  <Panel>
    <PanelHead>
      <BookIcon star />
      <PanelTitle>Библиотека проекта</PanelTitle>
      <HeadButtons />
    </PanelHead>
    <Toolbar>
      <IconButton aria-label="Свернуть"><SquareIcon /></IconButton>
      <IconButton aria-label="Развернуть"><SquareIcon plus /></IconButton>
      <Divider $m={2} />
      <IconButton aria-label="Переименовать"><AbIcon /></IconButton>
      <Divider $m={2} />
      <IconButton aria-label="Группа"><Blocks size={17} dim /></IconButton>
      <IconButton aria-label="Блок"><Cube a="#4b6786" b="#344a68" d="#3d5776" /></IconButton>
      <IconButton aria-label="Экспорт"><SaveBlockIcon /></IconButton>
      <Divider />
      <IconButton aria-label="Удалить"><TrashIcon /></IconButton>
      <Divider />
      <IconButton aria-label="Сохранить"><DiskIcon size={15} a="#3d4148" b="#787c82" /></IconButton>
      <IconButton aria-label="Открыть"><FolderIcon size={17} a="#65503a" b="#7d6445" /></IconButton>
      <Divider $m={2} />
      <IconButton aria-label="Копировать"><CopyIcon /></IconButton>
    </Toolbar>
    <ColumnHead>Наименование</ColumnHead>
    <TreeArea>
      <TreeView $end>
        <TreeList $h={354}>
          {projectRows.map((name, i) => (
            <TreeRow key={name}>
              <RowMark>{i === 15 && <Chevron dir="right" />}</RowMark>
              <RowLead $w={103} $pad={1} $gap={4}><Cube /></RowLead>
              <RowText $selected={i === 15}>{name}</RowText>
            </TreeRow>
          ))}
        </TreeList>
      </TreeView>
      <Scroll before={219} thumb={82} after={1} />
    </TreeArea>
    <Splitter />
    <Description>
      <DescTitle>Краткое описание:</DescTitle>
      <DescText>Розетка ПК (Capabilities: on_off Instance: on) [WRITE]</DescText>
      <Scroll before={1} thumb={0} after={1} />
    </Description>
    <BottomTabs>
      <BottomTab $w={93}><StructIcon />Структу...</BottomTab>
      <BottomTab $w={93} $active><BookIcon star />Библиот...</BottomTab>
      <BottomTab $w={88}><BinocularsIcon />Резуль...</BottomTab>
      <BottomTab $w={98}><ChipIcon />Состав о...</BottomTab>
    </BottomTabs>
  </Panel>
);

const LibraryPanel = () => (
  <Panel>
    <PanelHead>
      <BookIcon />
      <PanelTitle>Библиотека</PanelTitle>
      <HeadButtons />
    </PanelHead>
    <Toolbar>
      <IconButton aria-label="Открыть"><FolderIcon size={17} a="#d98f3a" b="#f3bd6c" /></IconButton>
      <Divider $m={2} />
      <IconButton aria-label="Свернуть"><SquareIcon /></IconButton>
      <IconButton aria-label="Развернуть"><SquareIcon plus /></IconButton>
      <Divider $m={2} />
      <IconButton aria-label="Обновить"><RestartIcon /></IconButton>
      <Spring />
      <IconButton aria-label="Справка"><HelpIcon size={14} /></IconButton>
    </Toolbar>
    <ColumnHead>Наименование</ColumnHead>
    <TreeArea>
      <TreeView>
        <TreeList $h={350}>
          {libraryRows.map(([level, icon, name, dir]) => (
            <TreeRow key={name}>
              <RowMark>{name === 'CHANGED' && <Chevron dir="right" />}</RowMark>
              <RowLead $w={43 + level * 21} $pad={3} $gap={7}>
                {dir && <Chevron dir={dir} size={11} color="#a8a8a8" />}
                {treeIcons[icon]}
              </RowLead>
              <RowText $selected={name === 'CHANGED'}>&nbsp;{name}</RowText>
            </TreeRow>
          ))}
        </TreeList>
      </TreeView>
      <Scroll before={1} thumb={165} after={142} />
    </TreeArea>
    <Splitter />
    <Description>
      <DescTitle>Краткое описание:</DescTitle>
      <DescText>Генерация импульса при изменении входящего значения</DescText>
      <Scroll before={1} thumb={0} after={1} />
    </Description>
    <BottomTabs>
      <BottomTab $w={104} $active><BookIcon size={20} />Библиотека</BottomTab>
      <BottomTab><GaugeIcon />Визуальные элементы</BottomTab>
    </BottomTabs>
  </Panel>
);

const EditorArea = () => (
  <Editor>
    <DocTabs>
      <DocTab $w={171}>
        <DocButton><PropsIcon size={16} />Свойства проекта</DocButton>
        <IconButton aria-label="Закрыть вкладку"><CrossIcon color="#8a8a8a" /></IconButton>
      </DocTab>
      <DocTab $w={226}>
        <DocButton><TagIcon size={16} />Переменные пользователя</DocButton>
        <IconButton aria-label="Закрыть вкладку"><CrossIcon color="#8a8a8a" /></IconButton>
      </DocTab>
      <DocTab $w={165} $active>
        <DocButton><LogicIcon />Розетка 1 логика</DocButton>
        <IconButton aria-label="Закрыть вкладку"><CrossIcon color="#d0d0d0" /></IconButton>
      </DocTab>
      <Spring />
      <IconButton $w={12} aria-label="Список вкладок"><Chevron color="#9a9a9a" /></IconButton>
    </DocTabs>
    <RunBar>
      <label htmlFor="run">Исполнение программы:</label>
      <SelectWrap>
        <RunSelect id="run" disabled defaultValue="Включена">
          <option>Включена</option>
        </RunSelect>
        <Chevron color="#5d965d" />
      </SelectWrap>
    </RunBar>
    <CanvasRow>
      <Canvas>
        <Wires width="100%" height="100%" fill="none" stroke="#10651a" strokeWidth="4">
          <path d="M348 53C400 53 430 57 485 58" />
          <path d="M304 291C314 290 316 276 330 275" />
          <path d="M326 291C390 293 400 325 485 325" />
          <path d="M458 279C464 292 466 308 485 308" />
        </Wires>
        <Block n="2" title="PULSE GENERATOR" x={194} y={25} w={127} h={87} fill={BLUE} split={54} ins={pulseIns} outs={pulseOuts} insH={33} outsH={50} />
        <Block n="3" title="Розетка ПК (R)" x={486} y={29} w={126} h={189} fill={SAND} split={40} ins={[{ name: 'Update', kind: 'bool' }]} outs={socketOuts} insH={17} outsH={167} />
        <Node $x={181} $y={279} $w={120} $h={20} $fill="#00dcff" $edge="#0a25d8" $round={10}>
          <NodeNumber>4</NodeNumber>
          <NodeTitle>Управление</NodeTitle>
          <SidePort><Port $kind="bool" /></SidePort>
          <SidePort $out><Port $kind="bool" /><Badge>Вкл</Badge></SidePort>
        </Node>
        <Node $x={329} $y={263} $w={102} $h={24} $fill={BLUE}>
          <NodeNumber>5</NodeNumber>
          <NodeTitle $h={20} $strong>CHANGED</NodeTitle>
          <SidePort><Port $kind="bool" /></SidePort>
          <SidePort $out><Port $kind="bool" /><Badge>Откл</Badge></SidePort>
        </Node>
        <Block n="6" title="Розетка ПК (on_off.on W)" x={486} y={279} w={126} h={87} fill={SAND} split={42} ins={[{ name: 'Write', kind: 'bool' }, { name: 'Value', kind: 'bool' }]} outs={writeOuts} insH={33} outsH={33} />
        <Pointer><CursorIcon /></Pointer>
      </Canvas>
      <Scroll before={252} thumb={30} after={205} />
    </CanvasRow>
    <HBar>
      <Chevron dir="left" />
      <HSpace $grow={625} />
      <HThumb $grow={197} />
      <HSpace $grow={446} />
      <Chevron dir="right" />
    </HBar>
  </Editor>
);

const ErrorPanel = () => (
  <ErrorDock>
    <PanelHead $h={26} $gap={3}>
      <WarnTriangle />
      <PanelTitle>Список ошибок</PanelTitle>
      <HeadButtons />
    </PanelHead>
    <Toolbar $gap={2} $foot={3}>
      <IconButton $w={17} aria-label="Очистить"><ClearIcon /></IconButton>
      <Divider $m={5} />
      <IconButton $w={22} $on aria-label="Ошибки"><CancelIcon size={16} /></IconButton>
      <IconButton $w={22} $on aria-label="Предупреждения"><Diamond /></IconButton>
      <IconButton $w={22} $on aria-label="Сообщения"><Diamond info /></IconButton>
    </Toolbar>
    <ErrorArea>
      <TableView>
        <ErrorTable>
          <colgroup>
            <col style={{ width: 16 }} />
            <col style={{ width: 19 }} />
            <col style={{ width: 54 }} />
            <col />
          </colgroup>
          <thead>
            <tr><Th /><Th /><Th>Код</Th><Th>Описание</Th></tr>
          </thead>
          <tbody>
            {errors.map(([code, text, info]) => (
              <tr key={text}>
                <Td />
                <IconTd><Diamond info={info} /></IconTd>
                <Td $align="right">{code}</Td>
                <Td>{text}</Td>
              </tr>
            ))}
          </tbody>
        </ErrorTable>
      </TableView>
      <ScrollColumn>
        <Scroll before={1} thumb={56} after={90} />
      </ScrollColumn>
    </ErrorArea>
    <BottomTabs $h={30}>
      <BottomTab $w={78}><ClipboardIcon />Журнал</BottomTab>
      <BottomTab $active><WarnTriangle />Список ошибок</BottomTab>
    </BottomTabs>
  </ErrorDock>
);

export default function App() {
  return (
    <>
      <Global />
      <Shell>
        <TitleBar>
          <QuickBar>
            <QuickButton $dim aria-label="Новый"><PageIcon size={16} /></QuickButton>
            <QuickButton $dim aria-label="Открыть"><FolderIcon size={16} /></QuickButton>
            <QuickButton $dim $after={5} aria-label="Сохранить"><DiskIcon size={16} /></QuickButton>
            <QuickButton aria-label="Настроить">
              <Svg><path d="M4 5h8M4 7.500h8l-4 4z" fill="#f2f2f2" stroke="#f2f2f2" /></Svg>
            </QuickButton>
          </QuickBar>
          <AppTitle>YA_NEON</AppTitle>
          <WindowButtons>
            <WindowButton aria-label="Свернуть"><Svg size={12} box={12}><path d="M1 6h10" stroke="#ffffff" strokeWidth="2" /></Svg></WindowButton>
            <WindowButton aria-label="Восстановить"><Svg size={12} box={12}><path d="M1.500 3.500h7v7h-7zM3.500 3.500v-2h7v7h-2" stroke="#e8e8e8" /></Svg></WindowButton>
            <WindowButton aria-label="Закрыть"><CrossIcon color="#e8e8e8" /></WindowButton>
          </WindowButtons>
        </TitleBar>
        <TabRow>
          <RibbonTab $active>Главная</RibbonTab>
          <RibbonTab>Расширения</RibbonTab>
          <RibbonTab>Вид</RibbonTab>
          <TabTools>
            <IconButton aria-label="Свернуть ленту"><Chevron dir="up" color="#8a8a8a" /></IconButton>
            <IconButton aria-label="Справка"><HelpIcon size={14} /></IconButton>
          </TabTools>
        </TabRow>
        <Logo><AppBrain /></Logo>
        <RibbonBar />
        <Workspace>
          <ProjectPanel />
          <EditorArea />
          <LibraryPanel />
        </Workspace>
        <ErrorPanel />
        <StatusBar>
          <Lamp $dot $on />
          <StatusItem $m={15}>Tx: <Lamp /></StatusItem>
          <StatusItem $m={5}>Rx: <Lamp $on /></StatusItem>
          <StatusItem $m={16}>Ошибка: <Lamp /></StatusItem>
          <StatusItem $m={32}>Статус контроллера: <Lamp $on /></StatusItem>
          <StatusItem $m={8}>Версии: ОС:1.4 Загрузчик:2.1 Конфигурация:2.0 ПЛК id:CE06</StatusItem>
          <Spring />
          <StatusItem $m={0}>Цикл опроса: 00:00.187</StatusItem>
        </StatusBar>
        <Corner><CornerBand>Тестирование</CornerBand></Corner>
        <Watermark><WatermarkBrain /></Watermark>
      </Shell>
    </>
  );
}
